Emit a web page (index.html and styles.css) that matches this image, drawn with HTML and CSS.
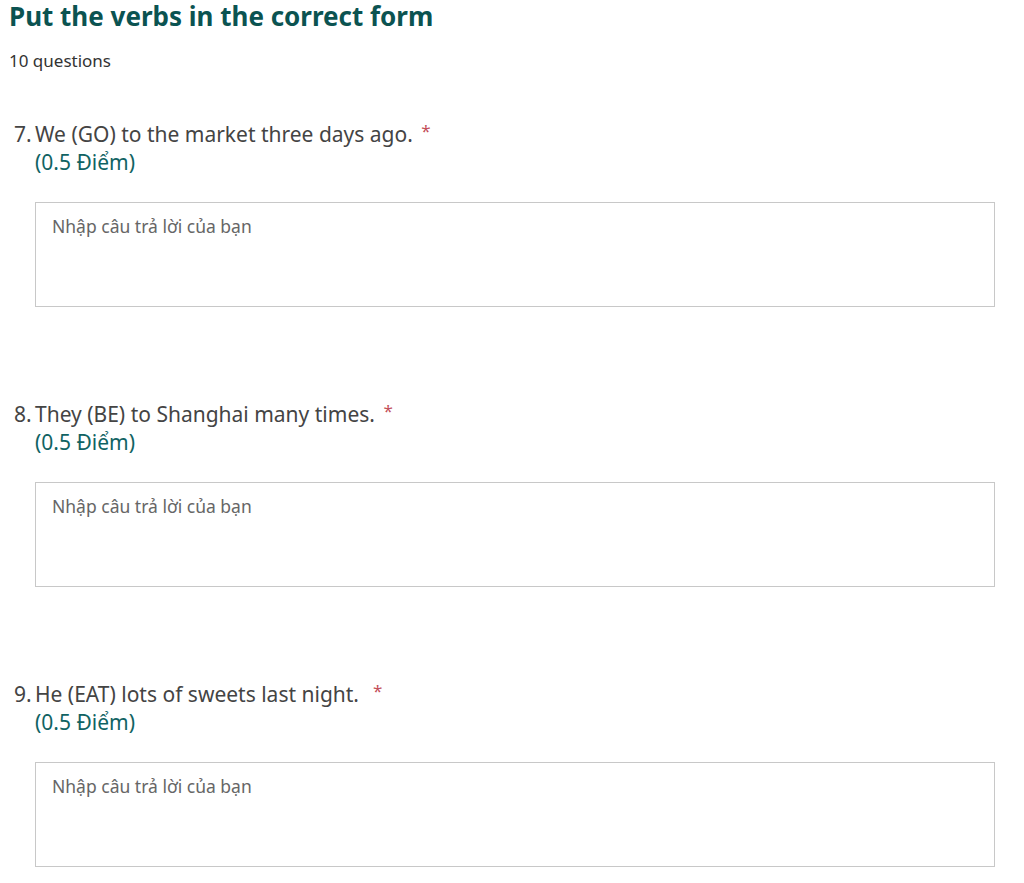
FILE: index.html
```html
<!DOCTYPE html>
<html lang="vi">
<head>
<meta charset="utf-8">
<title>Put the verbs in the correct form</title>
<link rel="stylesheet" href="styles.css">
</head>
<body>
<div class="page">
  <h1 class="title">Put the verbs in the correct form</h1>
  <div class="count">10 questions</div>

  <div class="question">
    <div class="q-head">
      <span class="q-num">7.</span>
      <div class="q-body">
        <div class="q-text">We (GO) to the market three days ago. <span class="req">*</span></div>
        <div class="q-points">(0.5 Điểm)</div>
      </div>
    </div>
    <div class="answer">Nhập câu trả lời của bạn</div>
  </div>

  <div class="question">
    <div class="q-head">
      <span class="q-num">8.</span>
      <div class="q-body">
        <div class="q-text">They (BE) to Shanghai many times. <span class="req">*</span></div>
        <div class="q-points">(0.5 Điểm)</div>
      </div>
    </div>
    <div class="answer">Nhập câu trả lời của bạn</div>
  </div>

  <div class="question">
    <div class="q-head">
      <span class="q-num">9.</span>
      <div class="q-body">
        <div class="q-text">He (EAT) lots of sweets last night. &nbsp;<span class="req">*</span></div>
        <div class="q-points">(0.5 Điểm)</div>
      </div>
    </div>
    <div class="answer">Nhập câu trả lời của bạn</div>
  </div>
</div>
</body>
</html>
```

FILE: styles.css
```css
html, body {
  margin: 0;
  padding: 0;
  background: #ffffff;
}

body {
  font-family: "Noto Sans", "Open Sans", "Liberation Sans", sans-serif;
  color: #333333;
}

.page {
  padding: 0 0 0 9px;
}

.title {
  margin: 0;
  font-size: 26px;
  line-height: 32px;
  font-weight: 700;
  color: #0b5351;
}

.count {
  margin-top: 17px;
  font-size: 17px;
  line-height: 24px;
  color: #333333;
}

.question {
  margin-top: 47px;
  padding-left: 5px;
}

.question + .question {
  margin-top: 93px;
}

.q-head {
  display: flex;
}

.q-num {
  width: 21px;
  font-size: 21px;
  line-height: 28px;
  color: #444444;
}

.q-text {
  font-size: 21px;
  line-height: 28px;
  color: #444444;
}

.req {
  display: inline-block;
  vertical-align: top;
  margin-left: 3px;
  font-size: 17px;
  line-height: 22px;
  color: #c4505a;
}

.q-points {
  font-size: 21px;
  line-height: 28px;
  color: #106363;
}

.answer {
  margin: 26px 0 0 21px;
  width: 960px;
  height: 105px;
  box-sizing: border-box;
  border: 1px solid #c8c8c8;
  padding: 11px 16px;
  font-size: 17.5px;
  line-height: 24px;
  color: #666666;
}
```
